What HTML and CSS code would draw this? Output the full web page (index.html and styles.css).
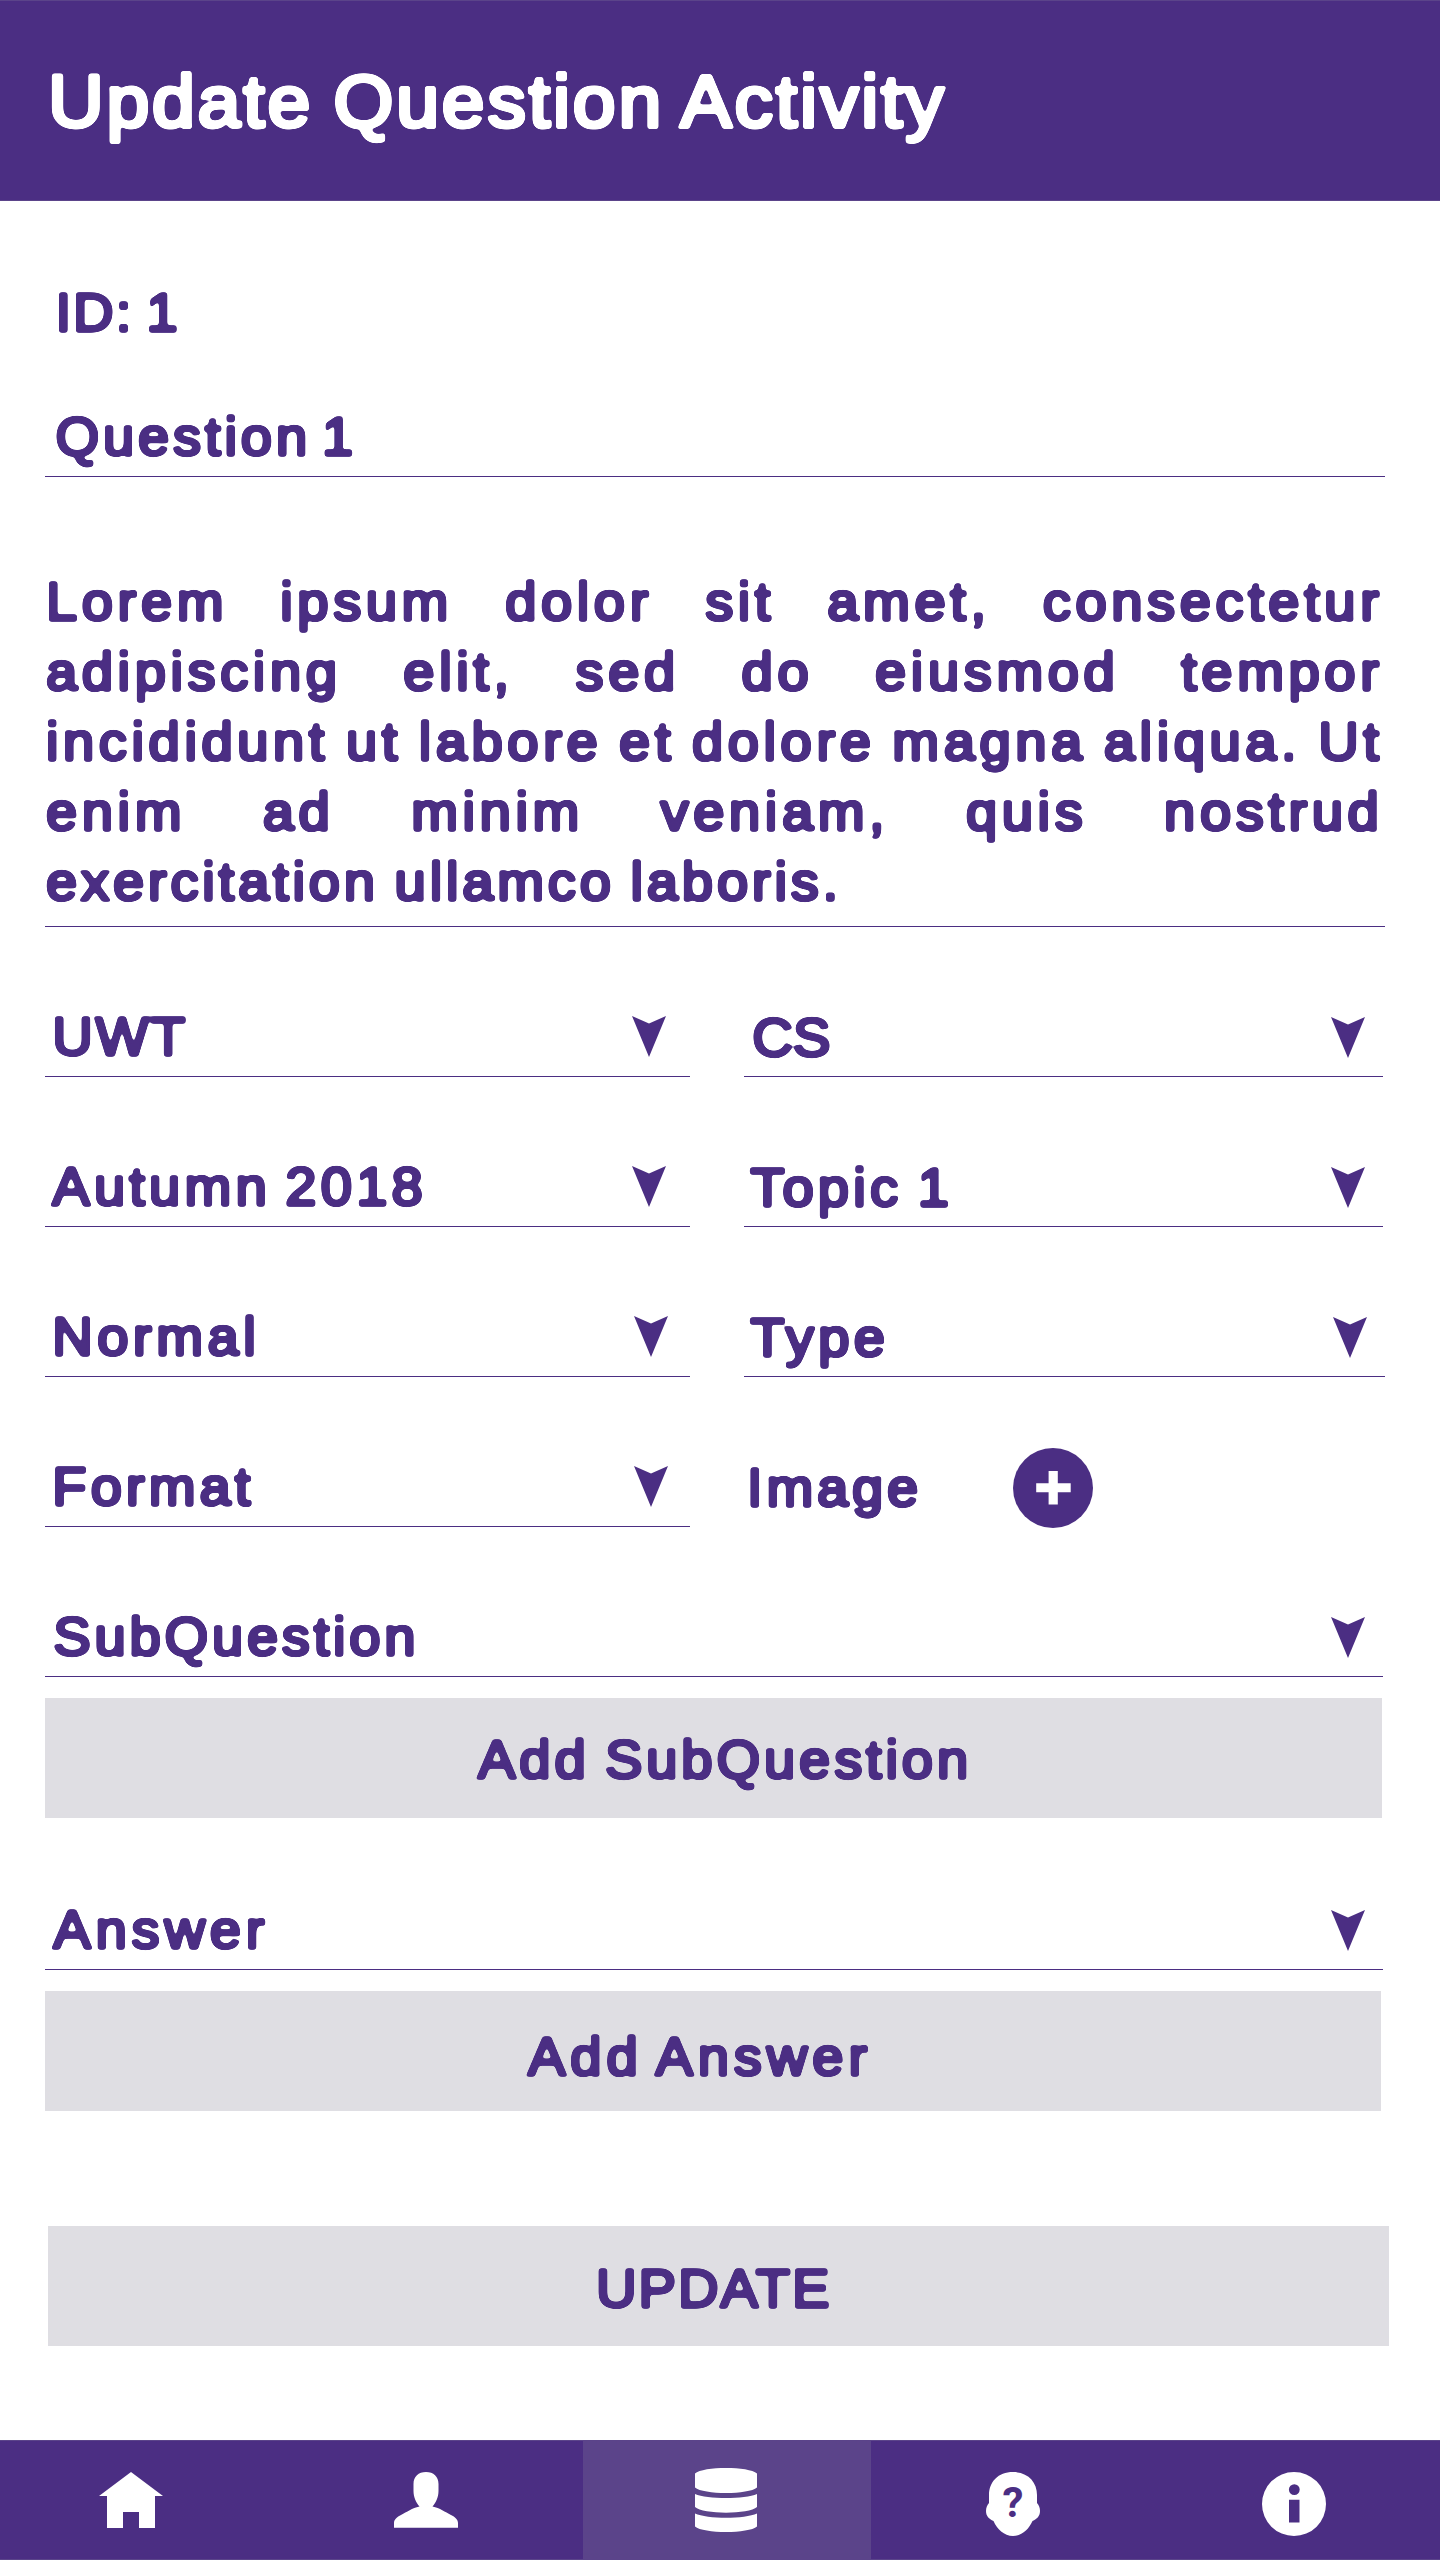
FILE: index.html
```
<!DOCTYPE html>
<html lang="en">
<head>
<meta charset="utf-8">
<title>Update Question Activity</title>
<link rel="stylesheet" href="styles.css">
</head>
<body>
<svg class="defs" width="0" height="0" aria-hidden="true">
  <defs>
    <!-- softens the corners of the letters into a rounded face -->
    <filter id="rounded" x="-2%" y="-10%" width="104%" height="120%" color-interpolation-filters="sRGB">
      <feGaussianBlur stdDeviation="1.7"/>
      <feColorMatrix values="1 0 0 0 0  0 1 0 0 0  0 0 1 0 0  0 0 0 5.5 -2.2"/>
    </filter>
    <symbol id="arrow" viewBox="0 0 34 41"><path d="M0 0L17 7.5L34 0L17 41Z" fill="#4b2e83"/></symbol>
  </defs>
</svg>

<header class="header"><h1 class="title text">Update Question Activity</h1></header>

<main class="form">
  <div class="record-id text">ID: 1</div>
  <div class="field field-question"><span class="text question">Question 1</span></div>
  <div class="body-field"><p class="body text"><span class="stretched">Lorem ipsum dolor sit amet, consectetur adipiscing elit, sed do eiusmod tempor incididunt ut labore et dolore magna aliqua. Ut enim ad minim veniam, quis nostrud</span> exercitation ullamco laboris.</p></div>

  <div class="selects">
    <div class="field"><span class="text uwt">UWT</span><svg class="arrow"><use href="#arrow"/></svg></div>
    <div class="field right"><span class="text cs">CS</span><svg class="arrow"><use href="#arrow"/></svg></div>
    <div class="field"><span class="text autumn">Autumn 2018</span><svg class="arrow"><use href="#arrow"/></svg></div>
    <div class="field right"><span class="text topic">Topic 1</span><svg class="arrow"><use href="#arrow"/></svg></div>
    <div class="field nudged"><span class="text normal">Normal</span><svg class="arrow"><use href="#arrow"/></svg></div>
    <div class="field right wide"><span class="text type">Type</span><svg class="arrow"><use href="#arrow"/></svg></div>
    <div class="field nudged"><span class="text format">Format</span><svg class="arrow"><use href="#arrow"/></svg></div>
    <div class="image-row"><span class="text image">Image</span>
      <svg class="add" viewBox="0 0 80 80"><circle cx="40" cy="40" r="40" fill="#4b2e83"/><path d="M35.6 23H44.8V35.3H57.7V44.2H44.8V56.5H35.6V44.2H23.2V35.3H35.6Z" fill="#fff"/></svg>
    </div>
  </div>

  <div class="field full"><span class="text subq">SubQuestion</span><svg class="arrow"><use href="#arrow"/></svg></div>
  <button class="button add-sub"><span class="text">Add SubQuestion</span></button>
  <div class="field full answer-field"><span class="text answer">Answer</span><svg class="arrow"><use href="#arrow"/></svg></div>
  <button class="button add-answer"><span class="text">Add Answer</span></button>
  <button class="button update"><span class="text">UPDATE</span></button>
</main>

<nav class="nav">
  <a class="tab tab-home"><svg width="64" height="64" viewBox="0 0 64 64"><path d="M32 0L64 24H56V56H40V40H24V56H8V24H0Z"/></svg></a>
  <a class="tab tab-user"><svg width="64" height="64" viewBox="0 0 64 64"><path d="M32 0C39.5 0 44.5 4.500 44.500 12V19C44.500 25 42 30.500 38.500 34.500C46 36 51 40 57 43C61 45 64 47.500 64 51V55.700H0V51C0 47.500 3 45 7 43C13 40 18 36 25.500 34.500C22 30.500 19.500 25 19.500 19V12C19.500 4.500 24.500 0 32 0Z"/></svg></a>
  <a class="tab tab-data"><svg width="62" height="64" viewBox="0 0 62 64"><path d="M0 5.500C8-1.800 54-1.800 62 5.500V19.500C54 26.800 8 26.800 0 19.500ZM0 26C12 31.300 50 31.300 62 26V39C54 46.500 8 46.500 0 39ZM0 45.500C12 51.200 50 51.200 62 45.500V58.500C54 65.800 8 65.800 0 58.500Z"/></svg></a>
  <a class="tab tab-quiz"><svg width="54" height="64" viewBox="0 0 54 64"><path d="M27 0C42 0 51 10 51 23V31C53 33 54 36 54 39C54 44 51 47 46.500 49C43 57 36 64 27 64S11 57 7.500 49C3 47 0 44 0 39C0 36 1 33 3 31V23C3 10 12 0 27 0Z"/><text class="mark" x="27" y="45" text-anchor="middle">?</text></svg></a>
  <a class="tab tab-info"><svg width="64" height="64" viewBox="0 0 64 64"><path fill-rule="evenodd" d="M32 0a32 32 0 1 1 0 64a32 32 0 1 1 0-64ZM32.300 12.200a5.400 5.400 0 1 0 0 10.800a5.400 5.400 0 1 0 0-10.800ZM27 27.700V50.500H37.500V27.700Z"/></svg></a>
</nav>
</body>
</html>
```
FILE: styles.css
```
* { box-sizing: border-box; }

body {
  margin: 0;
  height: 2560px;
  display: flex;
  flex-direction: column;
  background: #fff;
  color: #4b2e83;
  font: 54px/69px "Arial Rounded MT Bold", "Liberation Sans", Arial, sans-serif;
}

.defs { position: absolute; }

/* slightly extended letterforms */
.text {
  display: block;
  margin: 0;
  white-space: nowrap;
  -webkit-text-stroke: 3.3px currentColor;
  filter: url(#rounded);
  transform: scaleX(1.04);
  transform-origin: 0 0;
}

.header {
  height: 201px;
  padding-left: 48px;
  background: #4b2e83;
  border-top: 1px solid #5b448a;
  border-bottom: 1px solid #5b448a;
  color: #fff;
}

.title {
  width: 920px;
  font-size: 74px;
  font-weight: 400;
  line-height: 201px;
  letter-spacing: 2.7px;
  word-spacing: -3.5px;
  -webkit-text-stroke-width: 4px;
}

.form {
  flex: 1;
  display: flex;
  flex-direction: column;
  align-items: flex-start;
  padding: 77px 0 0 45px;
}

.record-id { padding-left: 10px; letter-spacing: 2px; word-spacing: -4.5px; }

.field {
  display: flex;
  justify-content: space-between;
  align-items: flex-start;
  width: 645px;
  height: 75px;
  border-bottom: 1px solid #4b2e83;
}

.field-question { width: 1340px; margin-top: 55px; }
.question { padding-left: 10px; letter-spacing: 3.7px; word-spacing: -8px; }

.body-field {
  width: 1340px;
  margin-top: 89px;
  padding: 0 0 10px 1px;
  border-bottom: 1px solid #4b2e83;
}

.body {
  width: 1286px;
  line-height: 70px;
  white-space: normal;
  text-align: justify;
  letter-spacing: 3.65px;
  word-spacing: -3.4px;
}

.stretched { letter-spacing: 4.4px; word-spacing: -6px; }

.selects {
  display: grid;
  grid-template-columns: 645px 641px;
  column-gap: 54px;
  row-gap: 75px;
  margin-top: 75px;
}

.arrow { width: 34px; height: 41px; margin: 14px 24px 0 0; }
.nudged .arrow { margin-right: 22px; }

.right { width: 639px; padding-top: 1px; }
.right .arrow { margin-right: 18px; }
.wide { width: 641px; }

.uwt { padding-left: 7px; letter-spacing: 2.5px; }
.autumn { padding-left: 7px; letter-spacing: 4px; word-spacing: -5px; }
.normal { padding-left: 7px; letter-spacing: 4.3px; }
.format { padding-left: 7px; letter-spacing: 3.9px; }
.cs { padding-left: 8px; letter-spacing: 0; }
.topic { padding-left: 6px; letter-spacing: 4px; word-spacing: -4px; }
.type { padding-left: 6px; letter-spacing: 4.2px; }

.image-row { display: flex; align-items: flex-start; height: 75px; }
.image { width: 269px; padding: 1px 0 0 3px; letter-spacing: 3.6px; }
.add { width: 80px; height: 80px; margin-top: -4px; }

.full { width: 1338px; margin-top: 75px; }
.full .arrow { margin: 15px 18px 0 0; }
.subq { padding-left: 8px; letter-spacing: 3.6px; }
.answer-field { margin-top: 77px; }
.answer { padding-left: 8px; letter-spacing: 4.6px; }

.button {
  display: flex;
  justify-content: flex-start;
  align-items: flex-start;
  width: 1337px;
  height: 120px;
  margin: 21px 0 0;
  padding: 0;
  border: 0;
  background: #dfdee3;
  color: inherit;
  font: inherit;
  line-height: 120px;
}

.add-sub { padding: 1px 0 0 433px; }
.add-sub .text { letter-spacing: 3.7px; word-spacing: -3.8px; }
.add-answer { width: 1336px; padding: 5px 0 0 483px; }
.add-answer .text { letter-spacing: 4.7px; word-spacing: -4.4px; }
.update { width: 1341px; margin: 115px 0 0 3px; padding: 2px 0 0 548px; }
.update .text { letter-spacing: 1.9px; }

.nav {
  display: grid;
  grid-template-columns: 262px 321px 288px 284px 285px;
  height: 120px;
  background: #4b2e83;
  border-top: 1px solid #5b448a;
  border-bottom: 1px solid #5b448a;
}

.tab { display: flex; padding-top: 31px; fill: #fff; }
.tab-home { padding-left: 99px; }
.tab-user { padding-left: 132px; }
.tab-data { padding: 27px 0 0 112px; background: #5b448a; }
.tab-quiz { padding-left: 115px; }
.tab-info { padding-left: 107px; }

.mark { font: 700 42px Roboto, sans-serif; fill: #4b2e83; }
```
